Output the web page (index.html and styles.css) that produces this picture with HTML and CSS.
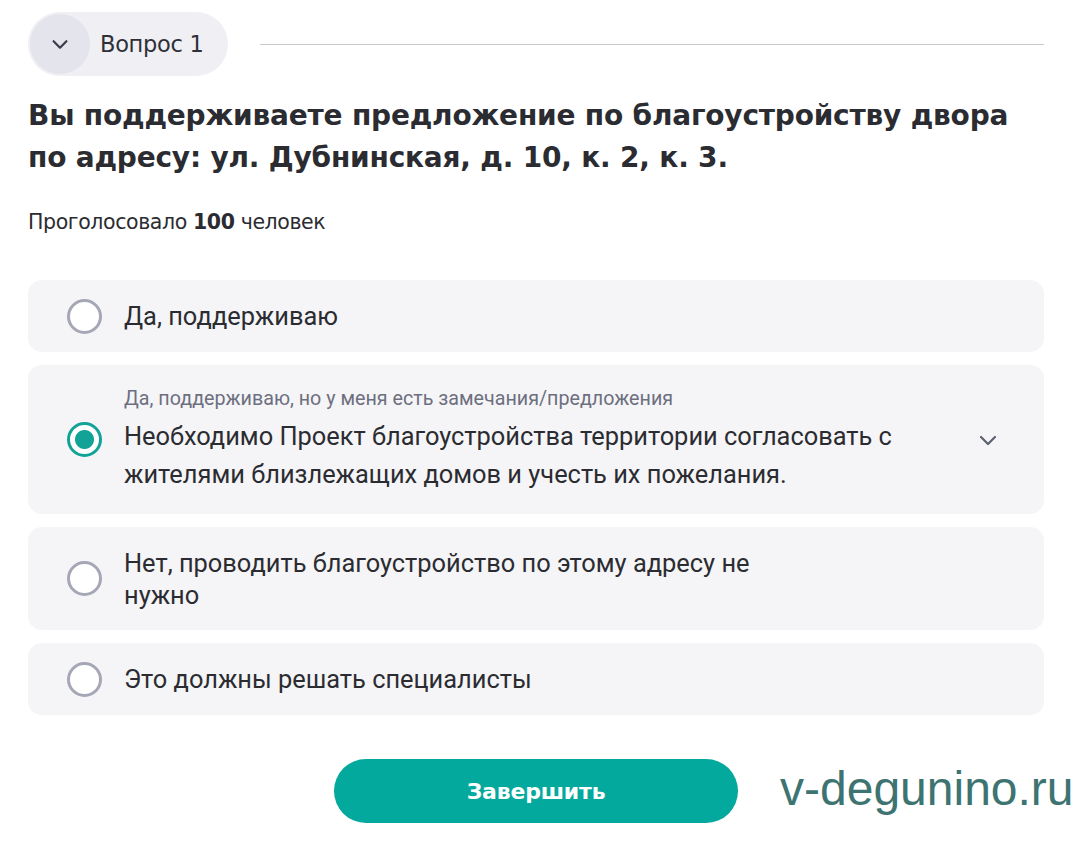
FILE: index.html
```html
<!DOCTYPE html>
<html lang="ru">
<head>
<meta charset="utf-8">
<link rel="stylesheet" href="styles.css">
</head>
<body>
<div class="page">
  <div class="head">
    <div class="pill">
      <span class="pill-icon">
        <svg width="22" height="22" viewBox="0 0 24 24"><path d="M5 9l7 7 7-7" fill="none" stroke="#3a3c4a" stroke-width="2.4" stroke-linecap="round" stroke-linejoin="round"/></svg>
      </span>
      <span class="pill-text">Вопрос 1</span>
    </div>
    <div class="rule"></div>
  </div>

  <h1 class="title">Вы поддерживаете предложение по благоустройству двора по адресу: ул. Дубнинская, д. 10, к. 2, к. 3.</h1>

  <p class="votes">Проголосовало <b>100</b> человек</p>

  <div class="options">
    <div class="option short">
      <span class="radio"></span>
      <span class="opt-text">Да, поддерживаю</span>
    </div>
    <div class="option tall">
      <span class="radio checked"></span>
      <div class="opt-body">
        <div class="opt-label">Да, поддерживаю, но у меня есть замечания/предложения</div>
        <div class="opt-text wide">Необходимо Проект благоустройства территории согласовать с жителями близлежащих домов и учесть их пожелания.</div>
      </div>
      <svg class="chev" width="24" height="24" viewBox="0 0 24 24"><path d="M5 9l7 7 7-7" fill="none" stroke="#5d6070" stroke-width="2.2" stroke-linecap="round" stroke-linejoin="round"/></svg>
    </div>
    <div class="option mid">
      <span class="radio"></span>
      <span class="opt-text narrow">Нет, проводить благоустройство по этому адресу не нужно</span>
    </div>
    <div class="option short">
      <span class="radio"></span>
      <span class="opt-text">Это должны решать специалисты</span>
    </div>
  </div>

  <div class="footer">
    <button class="submit">Завершить</button>
  </div>
  <div class="watermark">v-degunino.ru</div>
</div>
</body>
</html>
```
FILE: styles.css
```css
* { box-sizing: border-box; }
html, body { margin: 0; padding: 0; background: #fff; }
body { font-family: "Roboto", "Noto Sans", sans-serif; color: #2b2d33; }
.page { width: 1082px; height: 853px; padding: 12px 38px 0 28px; position: relative; overflow: hidden; }

.head { display: flex; align-items: center; gap: 32px; }
.pill { display: flex; align-items: center; height: 64px; width: 200px; background: #efeff4; border-radius: 32px; padding: 2px; gap: 10px; }
.pill-icon { width: 60px; height: 60px; border-radius: 50%; background: #e3e4ec; display: flex; align-items: center; justify-content: center; }
.pill-text { font-family: "DejaVu Sans", sans-serif; font-size: 22.5px; color: #2e3038; letter-spacing: -0.3px; }
.rule { flex: 1; height: 1px; background: #c8c9cf; }

.title { font-family: "DejaVu Sans", sans-serif; font-weight: 700; font-size: 28px; line-height: 42px; margin: 19px 0 0; max-width: 1000px; color: #2b2c31; letter-spacing: -0.2px; }
.votes { font-family: "DejaVu Sans", sans-serif; font-size: 20.5px; margin: 31px 0 0; color: #2b2c31; letter-spacing: -0.4px; }
.votes b { font-weight: 700; }

.options { margin-top: 46px; display: flex; flex-direction: column; gap: 13px; }
.option { background: #f5f5f7; border-radius: 14px; display: flex; align-items: center; padding: 0 40px 0 39px; gap: 22px; }
.option.short { height: 72px; }
.option.tall { height: 149px; }
.option.mid { height: 103px; }
.radio { width: 35px; height: 35px; border-radius: 50%; border: 3.5px solid #a5a7b6; background: #fff; flex: none; }
.radio.checked { border-color: #13a396; background: radial-gradient(circle, #13a396 0 9px, #fff 10px); }
.opt-text { font-size: 25.4px; line-height: 32px; color: #2b2c31; }
.opt-text.wide { line-height: 38px; max-width: 800px; }
.opt-text.narrow { max-width: 680px; }
.opt-body { flex: 1; padding-top: 2px; }
.opt-label { font-size: 19.7px; color: #6d6f7f; line-height: 22px; margin-bottom: 7px; }
.chev { flex: none; margin-left: 20px; margin-right: 4px; }

.footer { display: flex; justify-content: center; margin-top: 44px; }
.submit { width: 404px; height: 64px; border-radius: 32px; border: none; background: #04a99d; color: #fff; font-family: "DejaVu Sans", sans-serif; font-weight: 700; font-size: 22px; letter-spacing: -0.2px; }
.watermark { position: absolute; left: 780px; top: 761px; font-family: "Liberation Sans", Arial, sans-serif; font-size: 48px; color: #3d7471; }
```
